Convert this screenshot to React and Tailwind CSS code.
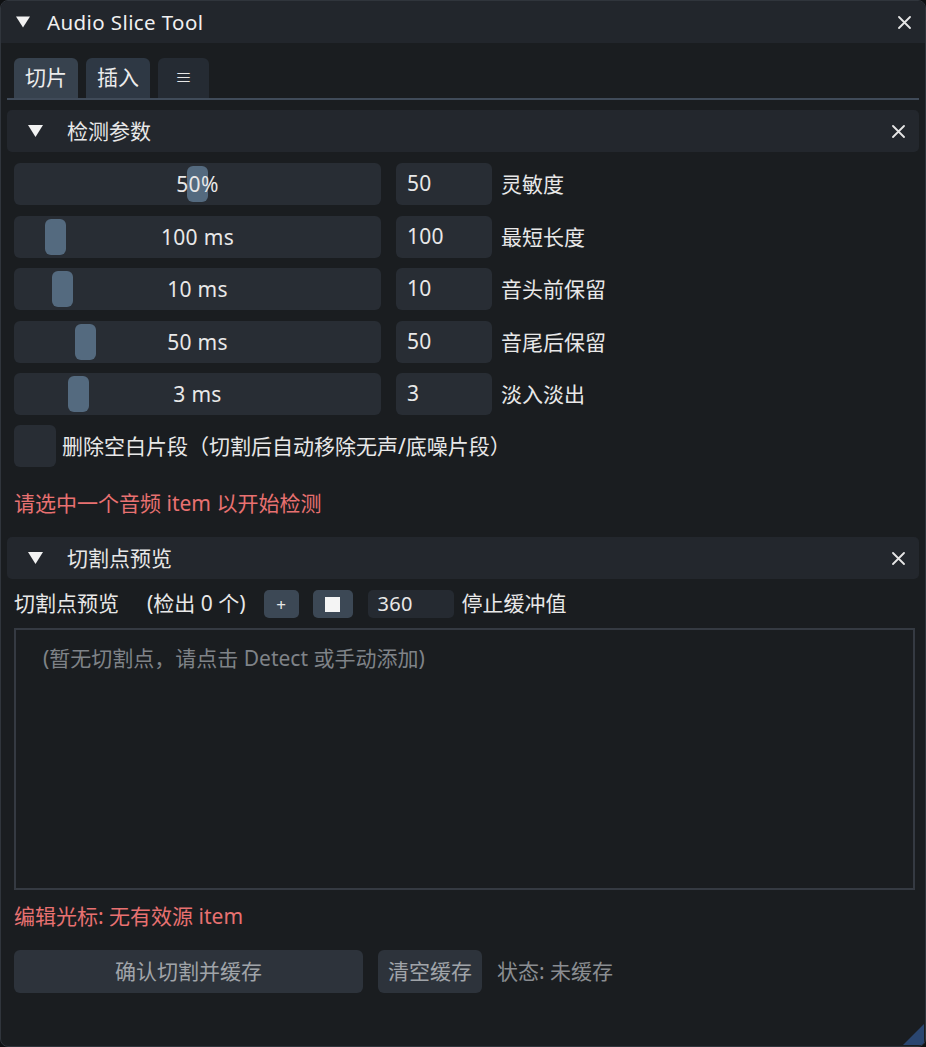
const FONT = 'font-["Noto_Sans","Noto_Sans_CJK_SC",sans-serif]'

const SLIDERS = [
  { label: '灵敏度', display: '50%', value: '50', grab: 173 },
  { label: '最短长度', display: '100 ms', value: '100', grab: 31 },
  { label: '音头前保留', display: '10 ms', value: '10', grab: 38 },
  { label: '音尾后保留', display: '50 ms', value: '50', grab: 61 },
  { label: '淡入淡出', display: '3 ms', value: '3', grab: 54 },
]

function Arrow({ className }) {
  return (
    <svg width="15" height="12" viewBox="0 0 15 12" className={className}>
      <polygon points="0,0 15,0 7.5,12" fill="#f2f2f2" />
    </svg>
  )
}

function Close({ className }) {
  return (
    <svg width="13" height="13" viewBox="0 0 13 13" className={className}>
      <path d="M1 1 L12 12 M12 1 L1 12" stroke="#e6e6e6" strokeWidth="1.8" strokeLinecap="round" />
    </svg>
  )
}

function Header({ title }) {
  return (
    <div className="h-[42px] rounded-[5px] bg-[#23272d] flex items-center">
      <Arrow className="ml-[21px]" />
      <span className="ml-[24px] text-[21px] leading-[24px] text-[#e8e8e8]">{title}</span>
      <Close className="ml-auto mr-[14px]" />
    </div>
  )
}

function SliderRow({ s }) {
  return (
    <div className="flex items-center h-[42px] pl-[7px]">
      <div className="relative w-[367px] h-[42px] rounded-[6px] bg-[#282d34] flex items-center justify-center">
        <div
          className="absolute top-[3px] w-[21px] h-[36px] rounded-[6px] bg-[#546a7f]"
          style={{ left: s.grab }}
        />
        <span className="relative text-[21px] leading-[24px] text-[#e8e8e8] tracking-[0.3px]">{s.display}</span>
      </div>
      <div className="ml-[15px] w-[96px] h-[42px] rounded-[6px] bg-[#282d34] flex items-center pl-[11px] text-[21px] text-[#e8e8e8] tracking-[0.3px]">
        {s.value}
      </div>
      <span className="ml-[9px] text-[21px] leading-[24px] text-[#e8e8e8]">{s.label}</span>
    </div>
  )
}

export default function App() {
  return (
    <div className={`${FONT} w-[926px] h-[1047px] bg-[#0f1113]`}>
      <div className="relative w-[926px] h-[1047px] rounded-[8px] border border-[#30353c] bg-[#1a1d20] overflow-hidden flex flex-col">
        {/* title bar */}
        <div className="h-[42px] bg-[#22262c] flex items-center shrink-0">
          <Arrow className="ml-[15px] w-[14px]" />
          <span className="ml-[17px] text-[20.5px] leading-[24px] text-[#f0f0f0] tracking-[0.4px]">Audio Slice Tool</span>
          <Close className="ml-auto mr-[14px]" />
        </div>

        <div className="px-[6px] flex flex-col">
          {/* tabs */}
          <div className="mt-[15px] flex pl-[7px] gap-[8px]">
            <div className="w-[64px] h-[40px] rounded-t-[6px] bg-[#37424e] flex items-center justify-center text-[21px] text-[#ececec]">切片</div>
            <div className="w-[64px] h-[40px] rounded-t-[6px] bg-[#2e3844] flex items-center justify-center text-[21px] text-[#ececec]">插入</div>
            <div className="w-[51px] h-[40px] rounded-t-[6px] bg-[#252b33] flex items-center justify-center text-[17px] text-[#e6e6e6]">≡</div>
          </div>
          <div className="h-[2px] bg-[#404b59]" />

          <div className="mt-[10px]">
            <Header title="检测参数" />
          </div>

          <div className="mt-[11px] flex flex-col gap-[10.5px]">
            {SLIDERS.map(s => <SliderRow key={s.label} s={s} />)}
          </div>

          <div className="mt-[10px] pl-[7px] flex items-center h-[42px]">
            <div className="w-[42px] h-[42px] rounded-[6px] bg-[#282d34]" />
            <span className="ml-[6px] text-[21px] leading-[24px] text-[#e8e8e8]">删除空白片段（切割后自动移除无声/底噪片段）</span>
          </div>

          <div className="mt-[24px] pl-[7px] text-[21px] leading-[24px] text-[#e87171]">请选中一个音频 item 以开始检测</div>

          <div className="mt-[22px]">
            <Header title="切割点预览" />
          </div>

          <div className="mt-[11px] pl-[7px] flex items-center h-[28px] text-[21px] text-[#e8e8e8]">
            <span>切割点预览</span>
            <span className="ml-[28px]">(检出 0 个)</span>
            <div className="ml-[18px] w-[35px] h-[28px] rounded-[5px] bg-[#3c4855] flex items-center justify-center text-[17px] leading-none">+</div>
            <div className="ml-[14px] w-[40px] h-[28px] rounded-[5px] bg-[#3c4855] flex items-center justify-center">
              <div className="w-[15px] h-[15px] bg-[#f4f4f4]" />
            </div>
            <div className="ml-[15px] w-[86px] h-[28px] rounded-[5px] bg-[#252a31] flex items-center pl-[10px] text-[20px] tracking-[0.3px]">360</div>
            <span className="ml-[8px]">停止缓冲值</span>
          </div>

          <div className="mt-[10px] ml-[7px] w-[901px] h-[262px] border-2 border-[#353a42] pt-[16px] pl-[27px]">
            <span className="text-[21px] leading-[24px] text-[#7f8388]">(暂无切割点，请点击 Detect 或手动添加)</span>
          </div>

          <div className="mt-[14px] pl-[7px] text-[21px] leading-[24px] text-[#e87171]">编辑光标: 无有效源 item</div>

          <div className="mt-[22px] pl-[7px] flex items-center">
            <div className="w-[349px] h-[43px] rounded-[6px] bg-[#2d333b] flex items-center justify-center text-[21px] text-[#a0a4a9]">确认切割并缓存</div>
            <div className="ml-[15px] w-[104px] h-[43px] rounded-[6px] bg-[#2d333b] flex items-center justify-center text-[21px] text-[#a0a4a9]">清空缓存</div>
            <span className="ml-[15px] text-[21px] text-[#8a8d91]">状态: 未缓存</span>
          </div>
        </div>

        {/* resize grip */}
        <svg width="21" height="21" viewBox="0 0 21 21" className="absolute right-[1px] bottom-[1px]">
          <polygon points="21,0 21,21 0,21" fill="#2a4670" />
        </svg>
      </div>
    </div>
  )
}
